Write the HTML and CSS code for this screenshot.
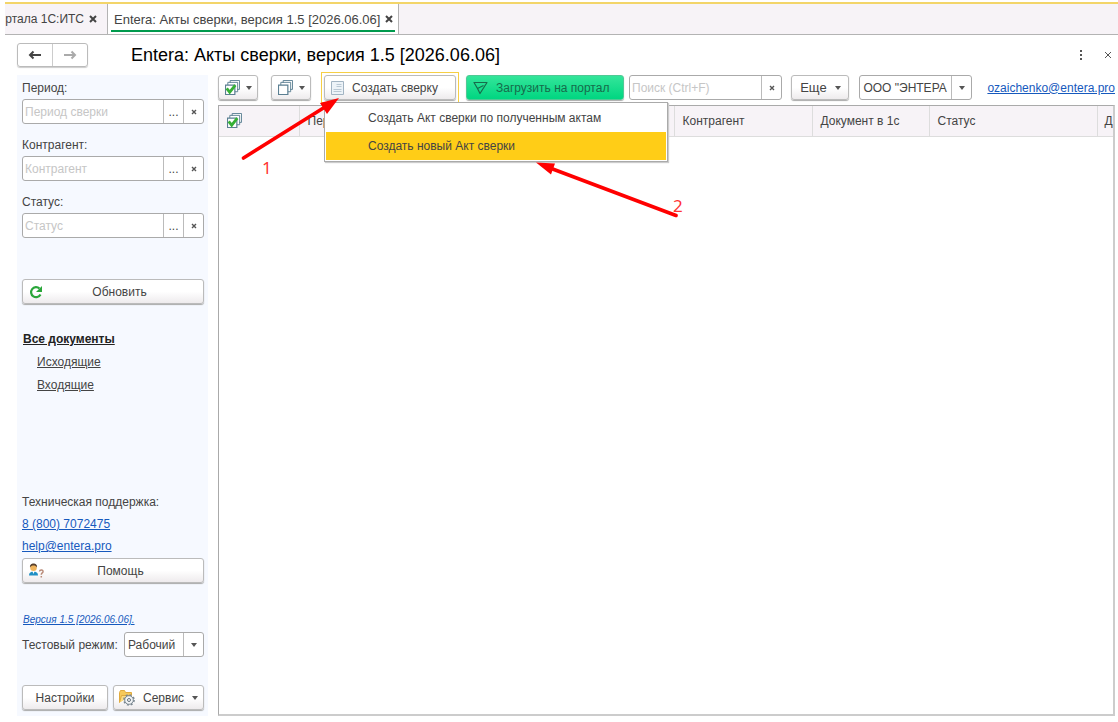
FILE: index.html
```html
<!DOCTYPE html>
<html lang="ru">
<head>
<meta charset="utf-8">
<title>Entera: Акты сверки</title>
<link rel="stylesheet" href="styles.css">
</head>
<body>
<svg class="defs" aria-hidden="true">
  <symbol id="stack" viewBox="0 0 16 16">
    <path d="M5.500 3V.500h10v9.500H13M3 5.500V2.500h10.500v10H10.500" fill="#fff" stroke="#5b7f92"/>
    <path d="M.5 5.500h10v10H.5z" fill="#fff" stroke="#5b7f92" stroke-width="1.300"/>
  </symbol>
  <symbol id="stack-check" viewBox="0 0 16 16">
    <use href="#stack"/>
    <path d="M1.800 9l3.200 4 6-7.500" fill="none" stroke="#35b035" stroke-width="3"/>
  </symbol>
</svg>
<div class="window">
  <nav class="tabs">
    <div class="tab tab-cut"><span>ртала 1С:ИТС</span><button class="tab-close" aria-label="Закрыть вкладку"><svg viewBox="0 0 8 8"><path d="M1 1l6 6M7 1L1 7"/></svg></button></div>
    <div class="tab tab-active"><span>Entera: Акты сверки, версия 1.5 [2026.06.06]</span><button class="tab-close" aria-label="Закрыть вкладку"><svg viewBox="0 0 8 8"><path d="M1 1l6 6M7 1L1 7"/></svg></button></div>
  </nav>
  <header class="header">
    <div class="history">
      <button aria-label="Назад"><svg viewBox="0 0 14 10"><path d="M13 5H3" stroke-width="2"/><path d="M5.500 1.500L2 5l3.500 3.500" stroke-width="2"/></svg></button>
      <button class="faded" aria-label="Вперед"><svg viewBox="0 0 14 10"><path d="M1 5h10" stroke-width="2"/><path d="M8.500 1.500L12 5 8.500 8.500" stroke-width="2"/></svg></button>
    </div>
    <h1>Entera: Акты сверки, версия 1.5 [2026.06.06]</h1>
    <button class="plain" aria-label="Меню"><svg width="4" height="12" viewBox="0 0 4 12"><path d="M1 1h2v2H1zM1 5h2v2H1zM1 9h2v2H1z" fill="#555"/></svg></button>
    <button class="plain" aria-label="Закрыть"><svg width="8" height="8" viewBox="0 0 8 8"><path d="M1 1l6 6M7 1L1 7" stroke="#555"/></svg></button>
  </header>
  <div class="body">
    <aside class="sidebar">
      <div class="filters">
        <div class="filter"><label for="period">Период:</label>
          <div class="field"><input id="period" placeholder="Период сверки"><button aria-label="Выбрать период">...</button><button aria-label="Очистить период"><svg class="x" viewBox="0 0 6 6"><path d="M1 1l4 4M5 1L1 5"/></svg></button></div></div>
        <div class="filter"><label for="partner">Контрагент:</label>
          <div class="field"><input id="partner" placeholder="Контрагент"><button aria-label="Выбрать контрагента">...</button><button aria-label="Очистить контрагента"><svg class="x" viewBox="0 0 6 6"><path d="M1 1l4 4M5 1L1 5"/></svg></button></div></div>
        <div class="filter"><label for="status">Статус:</label>
          <div class="field"><input id="status" placeholder="Статус"><button aria-label="Выбрать статус">...</button><button aria-label="Очистить статус"><svg class="x" viewBox="0 0 6 6"><path d="M1 1l4 4M5 1L1 5"/></svg></button></div></div>
      </div>
      <button class="btn wide refresh"><svg width="14" height="14" viewBox="0 0 14 14"><path d="M11.500 9.500A5 5 0 1 1 10.500 3.500" fill="none" stroke="#2aa63a" stroke-width="2.200"/><path d="M13 1v6H7z" fill="#2aa63a"/></svg><span>Обновить</span></button>
      <nav class="docs">
        <a class="all" href="#">Все документы</a>
        <a href="#">Исходящие</a>
        <a href="#">Входящие</a>
      </nav>
      <div class="support">
        <p>Техническая поддержка:</p>
        <a href="#">8 (800) 7072475</a>
        <a href="#">help@entera.pro</a>
        <button class="btn wide"><svg width="16" height="16" viewBox="0 0 16 16"><path d="M0 12.500c0-3 2-4 4.500-4s4.500 1 4.500 4z" fill="#1f8fc4"/><path d="M3.300 8h2.400L4.500 11z" fill="#fff"/><circle cx="4.500" cy="4.800" r="3.300" fill="#f0b45c"/><path d="M1 4.500C.7 1.500 2.500.5 4.500.5s3.900 1 3.500 4C7 3 6 2.500 4.500 2.500S2 3 1 4.500z" fill="#59402c"/><path d="M10.500 8.500c.3-2.200 4-1.900 3.500.3-.2 1.200-1.700 1-1.700 2.900M12.300 13v1.500" fill="none" stroke="#b98a78" stroke-width="1.500"/></svg><span>Помощь</span></button>
      </div>
      <a class="version" href="#">Версия 1.5 [2026.06.06].</a>
      <div class="mode"><label for="mode">Тестовый режим:</label>
        <div class="combo"><select id="mode"><option>Рабочий</option></select><i class="drop"></i></div></div>
      <div class="actions">
        <button class="btn">Настройки</button>
        <button class="btn"><svg width="16" height="16" viewBox="0 0 16 16"><path d="M.5 12.500v-10l1-2h4l1 2H12.500v3" fill="#f6c95a" stroke="#e0aa3e"/><path d="M.5 12.500l2-7h9.500" fill="#fbdc84" stroke="#e0aa3e"/><circle cx="10" cy="10" r="4.300" fill="#f3f5f7" stroke="#7a8791" stroke-width="1"/><circle cx="10" cy="10" r="5.100" fill="none" stroke="#7a8791" stroke-width="1.500" stroke-dasharray="2 2"/><circle cx="10" cy="10" r="1.500" fill="#fff" stroke="#63727d"/></svg><span>Сервис</span><i class="caret"></i></button>
      </div>
    </aside>
    <main class="main">
      <div class="toolbar">
        <button class="btn icon-btn" aria-label="Отметить"><svg width="15" height="15"><use href="#stack-check"/></svg><i class="caret"></i></button>
        <button class="btn icon-btn" aria-label="Снять отметки"><svg width="15" height="15"><use href="#stack"/></svg><i class="caret"></i></button>
        <div class="create">
          <button class="btn create-btn"><svg width="13" height="14" viewBox="0 0 13 14"><path d="M.5.5h12v13H.5z" fill="#edf3f8" stroke="#a2b4c3"/><path d="M5.500 3.500h5M5.500 5.500h5M2.500 8.500h8M2.500 10.500h8" stroke="#b9c8d4"/></svg><span>Создать сверку</span></button>
          <ul class="menu">
            <li><button>Создать Акт сверки по полученным актам</button></li>
            <li><button class="selected">Создать новый Акт сверки</button></li>
          </ul>
        </div>
        <button class="btn upload"><svg width="15" height="14" viewBox="0 0 15 14"><path d="M1 1.500h13L7 12.500 4.500 7.500zM4.500 7.500l6-3M1 1.500l3.500 6" fill="none" stroke="#176b4b" stroke-width="1.200" stroke-linejoin="round"/></svg><span>Загрузить на портал</span></button>
        <div class="field search"><input aria-label="Поиск" placeholder="Поиск (Ctrl+F)"><button aria-label="Очистить поиск"><svg class="x" viewBox="0 0 6 6"><path d="M1 1l4 4M5 1L1 5"/></svg></button></div>
        <button class="btn more">Еще<i class="caret"></i></button>
        <div class="combo org"><select aria-label="Организация"><option>ООО "ЭНТЕРА</option></select><i class="drop"></i></div>
        <a class="account" href="#">ozaichenko@entera.pro</a>
      </div>
      <div class="grid">
        <table>
          <colgroup><col class="c-mark"><col><col class="c-partner"><col class="c-doc"><col class="c-status"><col class="c-last"></colgroup>
          <thead><tr><th><svg width="15" height="15"><use href="#stack-check"/></svg></th><th>Период</th><th>Контрагент</th><th>Документ в 1с</th><th>Статус</th><th>Д</th></tr></thead>
        </table>
      </div>
    </main>
  </div>
  <svg class="notes" width="700" height="230" viewBox="0 0 700 230">
    <g stroke="#f00" stroke-width="3.600" stroke-linecap="round"><path d="M243.500 158L325 107M676 215.500L550 168"/></g>
    <g fill="#f00"><path d="M339 98l-12 16-7-11zM536 162.500l19 1-4 11z"/></g>
    <text x="262" y="174">1</text><text x="673" y="212">2</text>
  </svg>
</div>
</body>
</html>
```
FILE: styles.css
```css
* { box-sizing: border-box; }
body { margin: 0; background: #fff; color: #444; font: 12px "Liberation Sans", Arial, sans-serif; }
button, input, select { font: inherit; color: inherit; margin: 0; }
button { cursor: pointer; }
h1, p, ul { margin: 0; padding: 0; font-weight: normal; list-style: none; }
svg { display: block; flex: none; }
.defs { position: absolute; width: 0; height: 0; }
.window { position: relative; display: flex; flex-direction: column; height: 100vh; padding: 2px 0 6px; overflow: hidden; }

.tabs { display: flex; height: 33px; margin-left: 5px; background: #f7f3f7; border-top: 2px solid #f3d569; border-bottom: 1px solid #b3b3b3; }
.tab { display: flex; align-items: center; gap: 5px; padding: 0 5px 0 6px; border-right: 1px solid #b3b3b3; white-space: nowrap; }
.tab-cut { width: 103px; padding: 0 10px 0 0; justify-content: flex-end; overflow: hidden; }
.tab-active { background: linear-gradient(#009a4d, #009a4d) center 26px / calc(100% - 6px) 2px no-repeat #fff; font-size: 13px; }
.tab-close { padding: 0; border: 0; background: none; }
.tab-close svg { width: 8px; height: 8px; stroke: #444; stroke-width: 2; }

.header { display: flex; align-items: center; height: 40px; padding: 0 4px 0 17px; }
.history { display: flex; width: 71px; height: 24px; margin-right: 43px; border: 1px solid #bbb; border-radius: 3px; box-shadow: 0 1px 1px #ccc; }
.history button { display: flex; flex: 1; align-items: center; justify-content: center; padding: 0; border: 0; background: none; }
.history button + button { border-left: 1px solid #ccc; }
.history svg { width: 14px; height: 10px; fill: none; stroke: #444; }
.history .faded svg { stroke: #aaa; }
.header h1 { flex: 1; color: #000; font-size: 18px; }
.plain { padding: 2px; border: 0; background: none; }
.plain + .plain { margin-left: 17px; }

.body { display: flex; flex: 1; min-height: 0; gap: 10px; padding: 0 3px 0 17px; }
.sidebar { display: flex; flex: none; flex-direction: column; width: 191px; padding: 2px 4px 6px 5px; background: #f6f9ff; }
.filters { display: flex; flex-direction: column; gap: 10px; }
.filter label { display: block; line-height: 22px; }
.field, .combo { display: flex; height: 25px; border: 1px solid #aaa; border-radius: 3px; background: #fff; overflow: hidden; }
.field input { flex: 1; min-width: 0; width: 100%; padding: 0 2px; border: 0; outline: 0; background: none; }
.field input::placeholder { color: #c6c6c6; opacity: 1; }
.field button { display: flex; flex: none; align-items: center; justify-content: center; width: 20px; padding: 0; border: 0; border-left: 1px solid #bbb; background: none; }
.x { width: 6px; height: 6px; stroke: #555; stroke-width: 1.4; }
.btn { display: flex; align-items: center; justify-content: center; gap: 8px; height: 25px; padding: 0 6px; border: 1px solid #bbb; border-radius: 3px; background: linear-gradient(#fff 50%, #eeebed); box-shadow: 0 1px 1px #aaa; white-space: nowrap; }
.caret { border: 3px solid transparent; border-top: 4px solid #555; border-bottom: 0; }
.wide { width: 100%; }
.wide span { flex: 1; padding-right: 9px; }
.refresh { margin-top: 41px; }
.docs { display: flex; flex-direction: column; align-items: flex-start; gap: 1px; margin-top: 24px; line-height: 22px; }
.docs a { margin-left: 15px; color: #444; }
.docs .all { margin-left: 1px; color: #222; font-weight: bold; }
.support { display: flex; flex-direction: column; align-items: flex-start; margin-top: auto; line-height: 22px; }
.support a, .version, .account { color: #1659bd; }
.support .btn { margin-top: 1px; }
.version { margin: 30px 0 5px; padding-left: 1px; font-size: 10px; font-style: italic; line-height: 14px; }
.mode { display: flex; align-items: center; justify-content: space-between; white-space: nowrap; }
.combo select { flex: 1; min-width: 0; padding: 0 3px; border: 0; outline: 0; background: none; appearance: none; }
.combo { width: 80px; }
.drop { display: flex; flex: none; align-items: center; justify-content: center; width: 20px; border-left: 1px solid #bbb; pointer-events: none; }
.drop::before { content: ""; border: 3px solid transparent; border-top: 4px solid #555; border-bottom: 0; }
.actions { display: grid; grid-template-columns: 86px 1fr; gap: 5px; margin-top: 28px; padding-right: 2px; }
.actions .btn { padding: 0 5px; }

.main { display: flex; flex: 1; flex-direction: column; min-width: 0; }
.toolbar { display: flex; align-items: center; height: 25px; margin-bottom: 5px; }
.icon-btn { width: 40px; gap: 6px; margin-right: 13px; padding: 0; }
.create { position: relative; outline: 1px solid #f6cf45; outline-offset: 2px; }
.create-btn { width: 132px; justify-content: flex-start; }
.menu { position: absolute; top: 27px; left: 0; z-index: 2; width: 344px; padding: 1px; border: 1px solid #aaa; background: #fff; box-shadow: 1px 1px 1px #ccc; }
.menu button { display: block; width: 100%; height: 28px; padding: 0 42px; border: 0; background: none; text-align: left; white-space: nowrap; }
.menu .selected { background: #ffcd17; }
.upload { justify-content: flex-start; width: 158px; margin: 0 5px 0 10px; border-color: #50c995; background: linear-gradient(#34e59a, #00d681); color: #176b4b; }
.search { flex: 1; max-width: 400px; min-width: 100px; }
.more { width: 58px; margin: 0 10px 0 9px; font-size: 13px; }
.org { width: 113px; margin-right: 15px; }
.account { white-space: nowrap; }
.grid { flex: 1; min-height: 0; border: 1px solid #aaa; border-right: 2px solid #ccc; border-bottom: 2px solid #ccc; overflow: hidden; }
table { width: 100%; table-layout: fixed; border-collapse: collapse; }
th { height: 30px; padding: 0 8px; border-right: 1px solid #ddd; border-bottom: 1px solid #ddd; background: #f7f3f7; font-weight: normal; text-align: left; white-space: nowrap; overflow: hidden; }
th:last-child { padding: 0 0 0 7px; border-right: 0; }
.c-mark { width: 80px; }
.c-partner { width: 138px; }
.c-doc { width: 117px; }
.c-status { width: 168px; }
.c-last { width: 16px; }
.notes { position: absolute; top: 0; left: 0; z-index: 3; pointer-events: none; }
.notes text { fill: #f33; font: 17px "Noto Sans", sans-serif; }
```
